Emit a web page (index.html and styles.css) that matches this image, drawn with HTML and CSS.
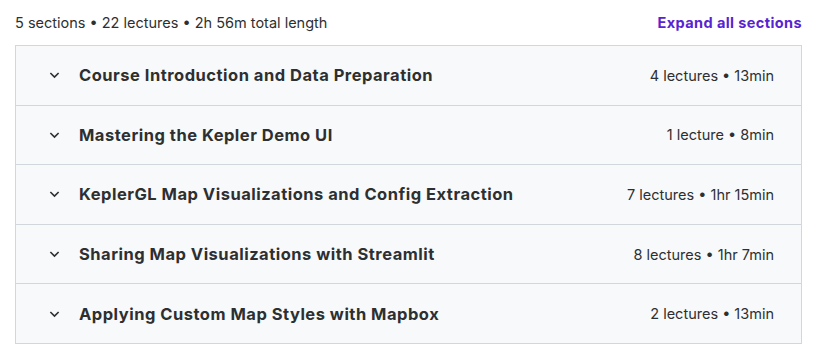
FILE: index.html
```html
<!DOCTYPE html>
<html lang="en">
<head>
    <meta charset="UTF-8">
    <meta name="viewport" content="width=device-width, initial-scale=1.0">
    <title>Course content</title>
    <link rel="stylesheet" href="styles.css">
</head>
<body>

<div class="curriculum">
    <div class="curriculum-header">
        <span class="summary">5 sections • 22 lectures • 2h 56m total length</span>
        <button class="expand-all">Expand all sections</button>
    </div>

    <div class="sections">
        <div class="section-row">
            <svg class="chevron" viewBox="0 0 12 8"><path d="M1.5 1.8 6 6.2l4.5-4.4" /></svg>
            <span class="section-title">Course Introduction and Data Preparation</span>
            <span class="section-meta">4 lectures • 13min</span>
        </div>
        <div class="section-row">
            <svg class="chevron" viewBox="0 0 12 8"><path d="M1.5 1.8 6 6.2l4.5-4.4" /></svg>
            <span class="section-title">Mastering the Kepler Demo UI</span>
            <span class="section-meta">1 lecture • 8min</span>
        </div>
        <div class="section-row">
            <svg class="chevron" viewBox="0 0 12 8"><path d="M1.5 1.8 6 6.2l4.5-4.4" /></svg>
            <span class="section-title">KeplerGL Map Visualizations and Config Extraction</span>
            <span class="section-meta">7 lectures • 1hr 15min</span>
        </div>
        <div class="section-row">
            <svg class="chevron" viewBox="0 0 12 8"><path d="M1.5 1.8 6 6.2l4.5-4.4" /></svg>
            <span class="section-title">Sharing Map Visualizations with Streamlit</span>
            <span class="section-meta">8 lectures • 1hr 7min</span>
        </div>
        <div class="section-row">
            <svg class="chevron" viewBox="0 0 12 8"><path d="M1.5 1.8 6 6.2l4.5-4.4" /></svg>
            <span class="section-title">Applying Custom Map Styles with Mapbox</span>
            <span class="section-meta">2 lectures • 13min</span>
        </div>
    </div>
</div>

</body>
</html>
```

FILE: styles.css
```css
body {
    font-family: Inter, "Noto Sans", Arial, sans-serif;
    background-color: #fff;
    color: #2d2f31;
    margin: 0;
    padding: 0;
}

.curriculum {
    margin-left: 15px;
    width: 787px;
}

.curriculum-header {
    display: flex;
    justify-content: space-between;
    align-items: center;
    height: 45px;
    padding-bottom: 1px;
    box-sizing: border-box;
}

.summary {
    font-size: 14.5px;
}

.expand-all {
    background: none;
    border: none;
    padding: 0;
    font-family: inherit;
    font-size: 14.5px;
    font-weight: 700;
    letter-spacing: 0.4px;
    color: #5624d0;
    cursor: pointer;
}

.sections {
    border: 1px solid #d1d7dc;
}

.section-row {
    display: flex;
    align-items: center;
    height: 58.6px;
    padding: 0 27px 0 33px;
    background-color: #f7f9fa;
    border-bottom: 1px solid #d1d7dc;
}

.section-row:last-child {
    border-bottom: none;
}

.chevron {
    width: 11px;
    height: 8px;
    fill: none;
    stroke: #2d2f31;
    stroke-width: 1.8;
    margin-right: 19px;
    flex-shrink: 0;
}

.section-title {
    flex: 1;
    font-size: 16.5px;
    font-weight: 700;
    letter-spacing: 0.5px;
}

.section-meta {
    font-size: 14.5px;
}
```
